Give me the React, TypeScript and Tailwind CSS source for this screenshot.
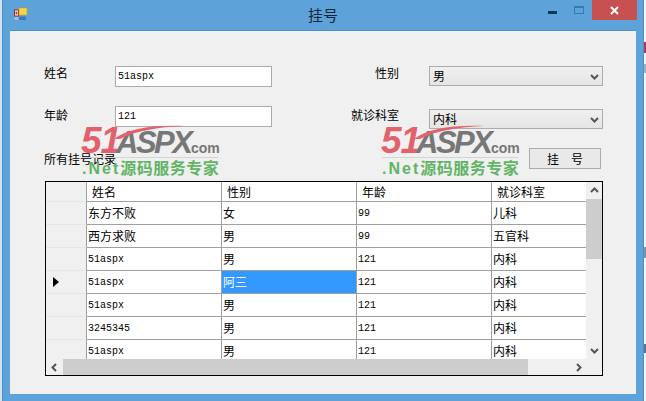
const cjk = "font-['Noto_Sans_CJK_SC','Liberation_Sans',sans-serif]";
const mono = "font-['Liberation_Mono','Noto_Sans_CJK_SC',monospace]";

function Chevron({ dir, className = "" }: { dir: "up" | "down" | "left" | "right"; className?: string }) {
  const points = {
    up: "1,6 4.5,2.5 8,6",
    down: "1,3 4.5,6.5 8,3",
    left: "6,1 2.5,4.5 6,8",
    right: "3,1 6.5,4.5 3,8",
  }[dir];
  return (
    <svg width="9" height="9" viewBox="0 0 9 9" className={className}>
      <polyline points={points} fill="none" stroke="#555" strokeWidth="2" />
    </svg>
  );
}

function Watermark({ className }: { className: string }) {
  return (
    <div className={`absolute w-[140px] h-[54px] pointer-events-none ${className}`}>
      <div className="flex items-baseline h-[31px] leading-[31px] italic font-bold font-['Liberation_Sans',sans-serif]">
        <span className="text-[37px] text-[#e2616c] tracking-[-1px] w-[35px]">51</span>
        <span className="text-[31px] text-[#777777] tracking-[-2.5px] w-[71px] whitespace-nowrap">ASPX</span>
        <span className="text-[14px] text-[#777777] not-italic">.com</span>
      </div>
      <svg width="70" height="14" viewBox="0 0 70 14" className="absolute left-[33px] top-0">
        <path d="M0 14 C14 4 36 0 70 1 C44 2 20 6 6 14 Z" fill="#e2616c" />
      </svg>
      <div className="mt-[1px] ml-[1px] h-px w-[136px] bg-[#d4d4d4]" />
      <div className={`ml-[1px] whitespace-nowrap text-[16px] leading-[18px] font-bold text-[#62b565] tracking-[0.5px] ${cjk}`}>
        <span className="font-['Liberation_Sans',sans-serif] tracking-[2px]">.Net</span>源码服务专家
      </div>
    </div>
  );
}

const rows = [
  ["东方不败", "女", "99", "儿科"],
  ["西方求败", "男", "99", "五官科"],
  ["51aspx", "男", "121", "内科"],
  ["51aspx", "阿三", "121", "内科"],
  ["51aspx", "男", "121", "内科"],
  ["3245345", "男", "121", "内科"],
  ["51aspx", "男", "121", "内科"],
];

const isLatin = (s: string) => /^[0-9a-z]+$/.test(s);

function Cell({ text, width, selected }: { text: string; width: string; selected?: boolean }) {
  return (
    <div
      className={`${width} shrink-0 h-full border-r border-b border-[#a0a0a0] pl-[1px] flex items-center overflow-hidden whitespace-nowrap ${
        isLatin(text) ? `${mono} text-[10px]` : `${cjk} text-[12px]`
      } ${selected ? "bg-[#3399ff] text-white" : "bg-white text-black"}`}
    >
      {text}
    </div>
  );
}

function Combo({ value, className = "" }: { value: string; className?: string }) {
  return (
    <div
      className={`w-[174px] h-[20px] border border-[#acacac] bg-gradient-to-b from-[#f0f0f0] to-[#e5e5e5] flex items-center justify-between pl-[3px] pr-[3px] ${cjk} text-[12px] text-black ${className}`}
    >
      <span>{value}</span>
      <Chevron dir="down" />
    </div>
  );
}

function TextBox({ value }: { value: string }) {
  return (
    <div className={`w-[157px] h-[21px] border border-[#ababab] bg-white flex items-center pl-[2px] ${mono} text-[10px] text-black`}>
      {value}
    </div>
  );
}

export default function App() {
  return (
    <div className="relative w-[646px] h-[401px] overflow-hidden bg-[#f4f9fd] flex">
      <div className="w-[2px] h-full bg-[#cfe3f3]" />
      <div className="w-[642px] h-full bg-[#5da2d9] flex flex-col border-x border-[#4f8fc4]">
        <div className="relative h-[30px] shrink-0 flex items-start">
          <svg width="14" height="14" viewBox="0 0 14 14" className="ml-[11px] mt-[7px] shrink-0">
            <rect x="0.5" y="3" width="4" height="6" fill="#fff" stroke="#8a3030" />
            <rect x="1.5" y="4.5" width="2" height="3" fill="#d23b3b" />
            <rect x="5" y="1" width="8" height="7" fill="#f5d547" stroke="#c9a227" strokeWidth="0.6" />
            <rect x="5" y="9.5" width="7" height="3.5" fill="#3d78c7" />
            <rect x="0.5" y="10" width="4" height="3" fill="#a8bed6" />
          </svg>
          <div className={`absolute left-[305px] top-[5px] text-[15px] leading-[20px] text-[#10253a] ${cjk}`}>挂号</div>
          <div className="ml-auto mr-[6px] flex items-start">
            <div className="w-[9px] h-[3px] mt-[11px] bg-[#0f3557]" />
            <div className="w-[10px] h-[8px] mt-[6px] ml-[17px] border border-[#3e78a8] border-t-2" />
            <div className="w-[45px] h-[20px] ml-[8px] bg-[#c75050] flex items-center justify-center">
              <svg width="9" height="9" viewBox="0 0 9 9">
                <path d="M1 1 L8 8 M8 1 L1 8" stroke="#fff" strokeWidth="2" />
              </svg>
            </div>
          </div>
        </div>

        <div className="relative mx-[7px] w-[626px] h-[364px] bg-[#f0f0f0] border-t border-[#4f8fc4] flex flex-col pl-[35px]">
          <div className="flex mt-[35px] h-[21px]">
            <div className={`w-[71px] -ml-[1px] text-[12px] leading-[14px] text-black ${cjk}`}>姓名</div>
            <TextBox value="51aspx" />
            <div className={`w-[127px] text-right text-[12px] leading-[14px] text-black ${cjk}`}>性别</div>
            <div className="w-[30px]" />
            <Combo value="男" />
          </div>
          <div className="flex mt-[19px] h-[21px]">
            <div className={`w-[71px] -ml-[1px] text-[12px] leading-[14px] mt-[2px] text-black ${cjk}`}>年龄</div>
            <TextBox value="121" />
            <div className={`w-[127px] text-right text-[12px] leading-[14px] mt-[2px] text-black ${cjk}`}>就诊科室</div>
            <div className="w-[30px]" />
            <Combo value="内科" className="mt-[3px]" />
          </div>
          <div className="flex mt-[21px] h-[21px] w-[556px] justify-between">
            <div className={`-ml-[1px] self-end text-[12px] leading-[14px] mb-[3px] text-black ${cjk}`}>所有挂号记录</div>
            <div className={`w-[72px] h-[21px] border border-[#acacac] bg-[#e9e9e9] flex items-center justify-center gap-[12px] text-[12px] text-black ${cjk}`}>
              <span>挂</span>
              <span>号</span>
            </div>
          </div>

          <div className="mt-[12px] w-[558px] h-[195px] border border-black flex flex-col bg-[#f0f0f0]">
            <div className="flex h-[177px] shrink-0">
              <div className="w-[540px] h-[177px] overflow-hidden flex flex-col">
                <div className={`flex h-[20px] shrink-0 ${cjk} text-[12px] text-black`}>
                  <div className="w-[41px] shrink-0 border-r border-b border-r-[#a0a0a0] border-b-[#e6e6e6] bg-[#f0f0f0]" />
                  <div className="w-[135px] shrink-0 border-r border-b border-[#a0a0a0] pl-[5px] flex items-center bg-white">姓名</div>
                  <div className="w-[135px] shrink-0 border-r border-b border-[#a0a0a0] pl-[5px] flex items-center bg-white">性别</div>
                  <div className="w-[135px] shrink-0 border-r border-b border-[#a0a0a0] pl-[5px] flex items-center bg-white">年龄</div>
                  <div className="flex-1 border-b border-[#a0a0a0] pl-[5px] flex items-center bg-white">就诊科室</div>
                </div>
                {rows.map((r, i) => (
                  <div key={i} className="flex h-[23px] shrink-0">
                    <div className="w-[41px] shrink-0 h-full border-r border-b border-r-[#a0a0a0] border-b-[#e6e6e6] bg-[#f0f0f0] flex items-center pl-[7px]">
                      {i === 3 && (
                        <svg width="6" height="10" viewBox="0 0 6 10">
                          <path d="M0 0 L6 5 L0 10 Z" fill="#000" />
                        </svg>
                      )}
                    </div>
                    <Cell text={r[0]} width="w-[135px]" />
                    <Cell text={r[1]} width="w-[135px]" selected={i === 3} />
                    <Cell text={r[2]} width="w-[135px]" />
                    <div className={`flex-1 h-full border-b border-[#a0a0a0] bg-white pl-[1px] flex items-center ${cjk} text-[12px] text-black`}>{r[3]}</div>
                  </div>
                ))}
              </div>
              <div className="w-[16px] h-[177px] flex flex-col bg-[#f0f0f0]">
                <div className="h-[17px] flex items-center justify-center"><Chevron dir="up" /></div>
                <div className="h-[60px] bg-[#cdcdcd]" />
                <div className="flex-1" />
                <div className="h-[17px] flex items-center justify-center"><Chevron dir="down" /></div>
              </div>
            </div>
            <div className="flex h-[16px] bg-[#f0f0f0]">
              <div className="w-[17px] flex items-center justify-center"><Chevron dir="left" /></div>
              <div className="w-[465px] bg-[#cdcdcd]" />
              <div className="w-[42px]" />
              <div className="w-[17px] flex items-center justify-center"><Chevron dir="right" /></div>
            </div>
          </div>

          <Watermark className="left-[71px] top-[94px]" />
          <Watermark className="left-[371px] top-[94px]" />
        </div>
      </div>
      <div className="relative flex-1">
        <div className="absolute left-0 top-[42px] w-[2px] h-[11px] bg-[#b03a55]" />
        <div className="absolute left-0 top-[64px] w-[2px] h-[9px] bg-[#9fb0bf]" />
        <div className="absolute left-0 top-[247px] w-[2px] h-[11px] bg-[#7f93a5]" />
        <div className="absolute left-0 top-[344px] w-[2px] h-[9px] bg-[#5f7488]" />
      </div>
    </div>
  );
}
